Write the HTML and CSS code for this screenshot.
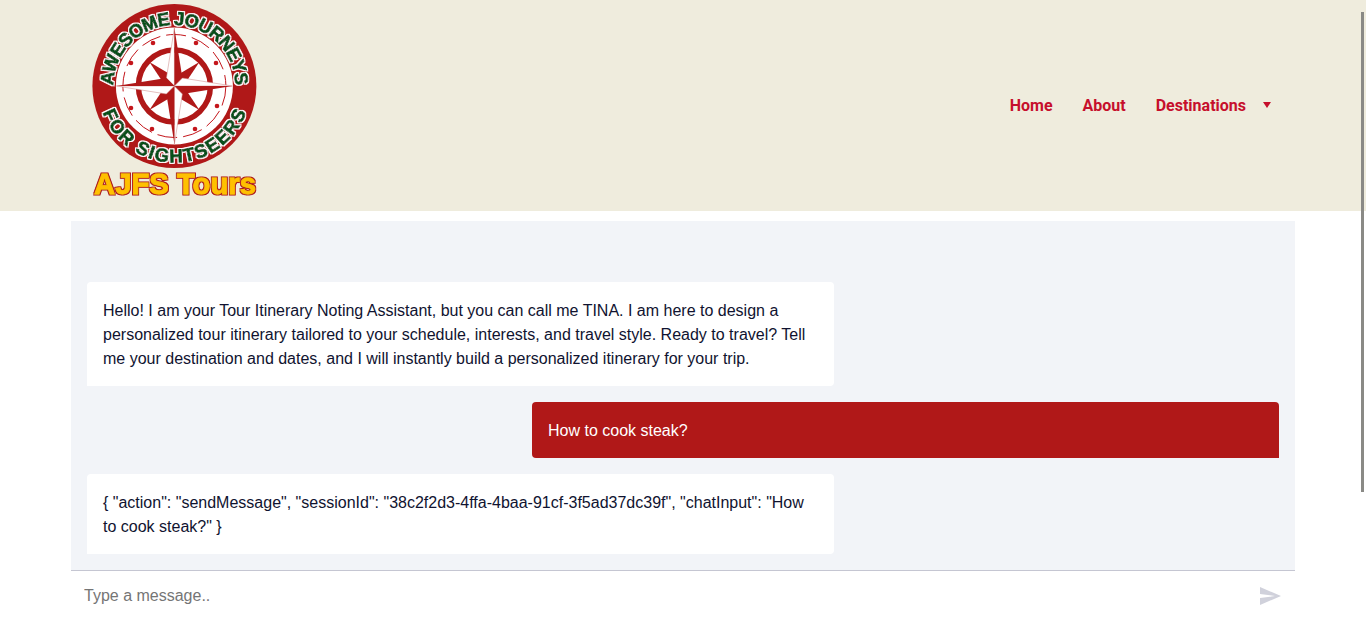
FILE: index.html
```html
<!DOCTYPE html>
<html lang="en">
<head>
<meta charset="utf-8">
<title>AJFS Tours</title>
<link rel="stylesheet" href="styles.css">
</head>
<body>
<header class="site-header">
  <a class="logo" href="#" aria-label="AJFS Tours">
    <svg class="logo-svg" width="190" height="211" viewBox="80 0 190 211">
      <defs>
        <path id="arc-top" d="M 113.4 86 A 61 61 0 0 1 235.4 86"/>
        <path id="arc-bottom" d="M 97.9 86 A 76.5 76.5 0 0 0 250.9 86"/>
        <filter id="arc-fx" x="-10%" y="-10%" width="120%" height="120%">
          <feMorphology in="SourceAlpha" operator="dilate" radius="0.6" result="wide"/>
          <feFlood flood-color="#ffffff"/>
          <feComposite in2="wide" operator="in" result="edge"/>
          <feMerge><feMergeNode in="edge"/><feMergeNode in="SourceGraphic"/></feMerge>
        </filter>
        <filter id="brand-fx" x="-5%" y="-20%" width="110%" height="140%">
          <feMorphology in="SourceAlpha" operator="dilate" radius="1.3" result="wide"/>
          <feFlood flood-color="#b01818"/>
          <feComposite in2="wide" operator="in" result="edge"/>
          <feMerge><feMergeNode in="edge"/><feMergeNode in="SourceGraphic"/></feMerge>
        </filter>
      </defs>
      <circle cx="174.4" cy="86" r="82" fill="#b01818"/>
      <circle cx="174.4" cy="86" r="58.5" fill="#fff"/>
      <circle cx="174.4" cy="86" r="51.5" class="dash"/>
      <circle cx="174.4" cy="86" r="36" class="ring"/>
      <g fill="#c4161c">
        <circle cx="153" cy="43" r="2.3"/><circle cx="196" cy="43" r="2.3"/>
        <circle cx="216" cy="63" r="2.3"/><circle cx="217" cy="106" r="2.3"/>
        <circle cx="195" cy="129" r="2.3"/><circle cx="152" cy="129" r="2.3"/>
        <circle cx="131" cy="108" r="2.3"/><circle cx="131" cy="63" r="2.3"/>
      </g>
      <g transform="translate(174.4 86)">
        <polygon class="red" points="25,-24 3,-11 0,0 11,-3"/>
        <polygon class="red" points="25,24 11,3 0,0 3,11"/>
        <polygon class="red" points="-25,24 -3,11 0,0 -11,3"/>
        <polygon class="red" points="-25,-24 -11,-3 0,0 -3,-11"/>
        <polygon class="white" points="0,-58 -8,-8 0,0"/>
        <polygon class="red" points="0,-58 8,-8 0,0"/>
        <polygon class="white" points="58,0 8,-8 0,0"/>
        <polygon class="red" points="58,0 8,8 0,0"/>
        <polygon class="white" points="0,58 8,8 0,0"/>
        <polygon class="red" points="0,58 -8,8 0,0"/>
        <polygon class="white" points="-58,0 -8,8 0,0"/>
        <polygon class="red" points="-58,0 -8,-8 0,0"/>
      </g>
      <text class="arc-text"><textPath href="#arc-top" startOffset="50%" text-anchor="middle" textLength="190">AWESOME JOURNEYS</textPath></text>
      <text class="arc-text"><textPath href="#arc-bottom" startOffset="50%" text-anchor="middle" textLength="186">FOR SIGHTSEERS</textPath></text>
      <text class="brand" x="94" y="194" textLength="162" lengthAdjust="spacingAndGlyphs">AJFS Tours</text>
    </svg>
  </a>
  <nav class="nav">
    <a class="nav-link" href="#">Home</a>
    <a class="nav-link" href="#">About</a>
    <a class="nav-link has-caret" href="#">Destinations<span class="caret"></span></a>
  </nav>
</header>
<main class="chat">
  <div class="messages">
    <div class="msg msg-bot">Hello! I am your Tour Itinerary Noting Assistant, but you can call me TINA. I am here to design a personalized tour itinerary tailored to your schedule, interests, and travel style. Ready to travel? Tell me your destination and dates, and I will instantly build a personalized itinerary for your trip.</div>
    <div class="msg msg-user">How to cook steak?</div>
    <div class="msg msg-bot">{ "action": "sendMessage", "sessionId": "38c2f2d3-4ffa-4baa-91cf-3f5ad37dc39f", "chatInput": "How to cook steak?" }</div>
  </div>
  <form class="composer">
    <input class="composer-input" type="text" placeholder="Type a message..">
    <button class="send" type="button" aria-label="Send">
      <svg width="24" height="24" viewBox="0 0 24 24"><path d="M2 21 23 12 2 3v7l15 2-15 2z"/></svg>
    </button>
  </form>
</main>
<div class="scroll-thumb"></div>
</body>
</html>
```

FILE: styles.css
```css
* { box-sizing: border-box; }
html, body { margin: 0; height: 635px; overflow: hidden; background: #fff; }
body { font-family: "Liberation Sans", Arial, sans-serif; position: relative; }

.site-header {
  height: 211px;
  background: #efecdd;
  display: flex;
  align-items: center;
  justify-content: space-between;
  padding: 0 95px 0 80px;
}
.logo { display: block; height: 211px; }
.logo-svg { display: block; }
.dash { fill: none; stroke: #c4161c; stroke-width: 1; stroke-dasharray: 20 6; }
.ring { fill: none; stroke: #b01818; stroke-width: 5.5; }
.red { fill: #b01818; }
.white { fill: #fff; stroke: #c98080; stroke-width: .5; }
.arc-text {
  font: bold 18.5px "Liberation Sans", Arial, sans-serif;
  fill: #07501a;
  stroke: #07501a;
  stroke-width: .9px;
  filter: url(#arc-fx);
}
.brand {
  font: bold 29px "Liberation Sans", Arial, sans-serif;
  fill: #ffc000;
  stroke: #ffc000;
  stroke-width: .8px;
  filter: url(#brand-fx);
}

.nav { display: flex; gap: 30px; margin-top: -1px; }
.nav-link {
  font: 700 16px Roboto, sans-serif;
  color: #c60f2c;
  text-decoration: none;
  display: flex;
  align-items: center;
}
.caret {
  margin-left: 17px;
  width: 0;
  height: 0;
  border-left: 4px solid transparent;
  border-right: 4px solid transparent;
  border-top: 6px solid #c60f2c;
}

.chat { width: 1224px; margin: 10px auto 0; }
.messages {
  height: 349px;
  background: #f2f4f8;
  padding: 16px;
  display: flex;
  flex-direction: column;
  justify-content: flex-end;
  gap: 16px;
}
.msg {
  width: 747px;
  padding: 17px 16px 15px;
  font-size: 16px;
  line-height: 24px;
  border-radius: 4px;
}
.msg-bot { background: #fff; color: #101330; border-bottom-left-radius: 0; }
.msg-user { background: #b01818; color: #fff; align-self: flex-end; border-bottom-right-radius: 0; }

.composer {
  display: flex;
  align-items: center;
  border-top: 1px solid #c5c6d2;
  height: 50px;
}
.composer-input {
  flex: 1;
  border: 0;
  outline: 0;
  height: 48px;
  padding: 0 13px;
  font: 16px "Liberation Sans", Arial, sans-serif;
  background: transparent;
}
.send {
  border: 0;
  background: none;
  padding: 0;
  width: 24px;
  height: 24px;
  margin-right: 13px;
}
.send svg { display: block; fill: #d0d1db; }

.scroll-thumb {
  position: absolute;
  top: 12px;
  left: 1361px;
  width: 3px;
  height: 480px;
  background: #8a8a86;
}
```
